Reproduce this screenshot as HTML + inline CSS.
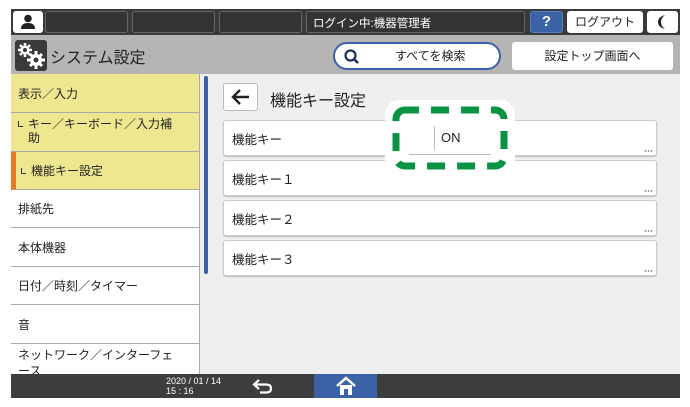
<!DOCTYPE html>
<html><head><meta charset="utf-8"><style>
*{margin:0;padding:0;box-sizing:border-box}
body{width:690px;height:407px;background:#fff;position:relative;overflow:hidden;font-family:"Liberation Sans","Noto Sans CJK JP",sans-serif;color:#222}
.a{position:absolute}
.top{left:11px;top:9px;width:669px;height:26px;background:#3a3a3a}
.tb{position:absolute;top:2px;height:22px;border:1px solid #666;border-radius:3px;background:#333}
.title{left:11px;top:35px;width:669px;height:39px;background:#b5b5b5}
.side{left:11px;top:74px;width:189px;height:300px;background:#fff;overflow:hidden}
.si{position:absolute;left:0;width:189px;border-bottom:1px solid #aaa;font-size:12px;padding-left:7px;display:flex;align-items:center}
.y{background:#efe78f}
.content{left:200px;top:74px;width:480px;height:300px;background:#efefef}
.row{position:absolute;left:23px;width:434px;height:36px;background:#fff;border:1px solid #ccc;border-radius:3px;font-size:12.5px;padding-left:8px;display:flex;align-items:center;box-shadow:0 1px 1px #bbb}
.dots{position:absolute;right:3px;bottom:3px;width:9px;height:2px;background:radial-gradient(circle,#999 0.8px,transparent 1px) 0 0/3px 2px}
.bot{left:11px;top:374px;width:669px;height:24px;background:#3d3d3d}
.mk{display:inline-block;width:5px;height:6px;border-left:1.5px solid #333;border-bottom:1.5px solid #333;margin-right:5px;margin-top:4px}
</style></head><body>
<div class="a top">
 <div class="tb" style="left:2px;width:30px;background:#fff;border-color:#fff"><svg width="30" height="20" viewBox="0 0 30 20"><circle cx="14" cy="6.5" r="3.8" fill="#222"/><path d="M7 17 Q7 11 14 11 Q21 11 21 17Z" fill="#222"/></svg></div>
 <div class="tb" style="left:34px;width:83px"></div>
 <div class="tb" style="left:121px;width:83px"></div>
 <div class="tb" style="left:208px;width:83px"></div>
 <div class="tb" style="left:295px;width:219px;color:#fff;font-size:11.5px;padding:3px 6px">ログイン中:機器管理者</div>
 <div class="tb" style="left:519px;width:33px;background:#3b62a6;border-color:#5a7fc0;color:#fff;font-size:15px;font-weight:bold;text-align:center;line-height:20px">?</div>
 <div class="tb" style="left:556px;width:76px;background:#fff;border-color:#fff;font-size:12px;text-align:center;line-height:20px">ログアウト</div>
 <div class="tb" style="left:636px;width:31px;background:#fff;border-color:#fff"><svg width="30" height="20" viewBox="0 0 30 20"><path d="M17 3 Q10 5 10 10 Q10 15 17 17 Q13 14 13 10 Q13 6 17 3Z" fill="#222"/></svg></div>
</div>
<div class="a title">
 <div class="a" style="left:4px;top:5px;width:32px;height:31px;background:#3a3a3a;border-radius:3px">
  <svg width="32" height="31" viewBox="0 0 32 31">
   <g fill="#fff"><circle cx="10" cy="10" r="4.5"/><g stroke="#fff" stroke-width="2.5"><path d="M10 3V17M3 10H17M5 5L15 15M15 5L5 15"/></g></g><circle cx="10" cy="10" r="2" fill="#3a3a3a"/>
   <g fill="#fff"><circle cx="21" cy="20" r="6"/><g stroke="#fff" stroke-width="3"><path d="M21 11V29M12 20H30M15 14L27 26M27 14L15 26"/></g></g><circle cx="21" cy="20" r="2.5" fill="#3a3a3a"/>
  </svg></div>
 <div class="a" style="left:39px;top:9px;font-size:16px">システム設定</div>
 <div class="a" style="left:322px;top:7px;width:168px;height:28px;background:#fff;border:2px solid #3b62a6;border-radius:14px;font-size:12px;line-height:24px;padding-left:60px"><svg class="a" style="left:8px;top:4px" width="18" height="18" viewBox="0 0 18 18"><circle cx="7.5" cy="7.5" r="5" fill="none" stroke="#1a2e5a" stroke-width="2.2"/><path d="M11 11 L15 15" stroke="#1a2e5a" stroke-width="2.6"/></svg>すべてを検索</div>
 <div class="a" style="left:501px;top:7px;width:161px;height:28px;background:#fff;border-radius:3px;font-size:12px;line-height:28px;text-align:center">設定トップ画面へ</div>
</div>
<div class="a side">
 <div class="si y" style="top:0;height:39px">表示／入力</div>
 <div class="si y" style="top:39px;height:39px;line-height:14px;align-items:flex-start;padding-top:4px"><span class="mk"></span><span>キー／キーボード／入力補<br>助</span></div>
 <div class="si y" style="top:78px;height:38px;border-left:5px solid #e87722;padding-left:5px"><span class="mk" style="margin-top:0"></span>機能キー設定</div>
 <div class="si" style="top:116px;height:38px">排紙先</div>
 <div class="si" style="top:154px;height:39px">本体機器</div>
 <div class="si" style="top:193px;height:38px">日付／時刻／タイマー</div>
 <div class="si" style="top:231px;height:39px">音</div>
 <div class="si" style="top:270px;height:40px;align-items:flex-start;padding-top:3px;line-height:16px">ネットワーク／インターフェ<br>ース</div>
</div>
<div class="a" style="left:199px;top:74px;width:1px;height:300px;background:#aaa"></div>
<div class="a content">
 <div class="a" style="left:4px;top:2px;width:4px;height:198px;background:#3b62a6;border-radius:2px"></div>
 <div class="a" style="left:23px;top:9px;width:35px;height:28px;background:#fff;border:1px solid #bbb;border-radius:3px"><svg width="33" height="26" viewBox="0 0 33 26"><path d="M10 13H25M16 6L9 13L16 20" fill="none" stroke="#222" stroke-width="2.4"/></svg></div>
 <div class="a" style="left:70px;top:13px;font-size:16px">機能キー設定</div>
 <div class="row" style="top:46px">機能キー<span class="dots"></span></div>
 <div class="row" style="top:86px">機能キー１<span class="dots"></span></div>
 <div class="row" style="top:126px">機能キー２<span class="dots"></span></div>
 <div class="row" style="top:166px">機能キー３<span class="dots"></span></div>
 <div class="a" style="left:185px;top:26px;width:130px;height:76px;background:#fff;border-radius:14px"></div>
 <svg class="a" style="left:190px;top:30px" width="120" height="68" viewBox="0 0 120 68"><rect x="6" y="6" width="108" height="56" rx="9" fill="none" stroke="#0a9342" stroke-width="7" stroke-dasharray="18 12" stroke-dashoffset="4"/></svg>
 <div class="a" style="left:234px;top:52px;width:1px;height:24px;background:#bbb"></div>
 <div class="a" style="left:209px;top:80px;width:82px;height:1px;background:#bbb"></div>
 <div class="a" style="left:241px;top:56px;font-size:13px">ON</div>
</div>
<div class="a bot">
 <div class="a" style="left:155px;top:2px;color:#fff;font-size:9px;line-height:10px">2020 / 01 / 14<br>15 : 16</div>
 <svg class="a" style="left:240px;top:3px" width="24" height="18" viewBox="0 0 24 18"><path d="M8 3 L3 7.5 L8 12 M3 7.5 H15 Q20 7.5 20 11.5 Q20 15.5 15 15.5 H9" fill="none" stroke="#fff" stroke-width="2.2"/></svg>
 <div class="a" style="left:303px;top:0;width:63px;height:24px;background:#3b62a6"><svg class="a" style="left:21px;top:2px" width="22" height="20" viewBox="0 0 22 20"><path d="M2 10 L11 2 L20 10" fill="none" stroke="#fff" stroke-width="2.5"/><path d="M5 9 V19 H9 V13 H13 V19 H17 V9" fill="#fff"/></svg></div>
</div>
</body></html>
